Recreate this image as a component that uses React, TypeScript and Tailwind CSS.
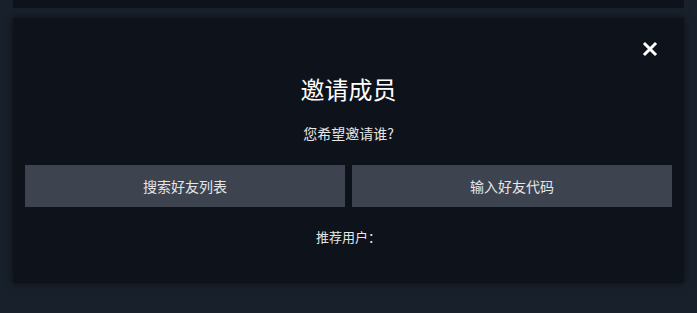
export default function App() {
  return (
    <div
      className="h-[313px] w-[697px] overflow-hidden bg-[#18202b] px-[13px]"
      style={{ fontFamily: "'Noto Sans CJK SC', 'Liberation Sans', sans-serif" }}
    >
      {/* previous panel edge */}
      <div className="h-2 bg-[#0e131b]" />

      {/* invite dialog */}
      <div className="relative mt-[10px] h-[265px] bg-[#0e131b] px-3 pt-[52px] shadow-[0_0_8px_rgba(0,0,0,0.5)]">
        <button className="absolute right-[26px] top-[23px] text-white">
          <svg width="16" height="16" viewBox="0 0 16 16">
            <path d="M3 3 L13 13 M13 3 L3 13" stroke="#fff" strokeWidth="3" strokeLinecap="square" />
          </svg>
        </button>

        <h1 className="text-center text-[24px] leading-[38px] text-white">邀请成员</h1>
        <p className="mt-[15px] text-center text-[14px] leading-[20px] text-[#e6e6e6]">您希望邀请谁?</p>

        <div className="mt-[22px] flex gap-[7px]">
          <button className="h-[42px] flex-1 bg-[#3d4450] text-[14px] text-[#e6e6e6]">搜索好友列表</button>
          <button className="h-[42px] flex-1 bg-[#3d4450] text-[14px] text-[#e6e6e6]">输入好友代码</button>
        </div>

        <p className="mt-[20px] text-center text-[13px] leading-[20px] text-[#e6e6e6]">推荐用户：</p>
      </div>
    </div>
  );
}
